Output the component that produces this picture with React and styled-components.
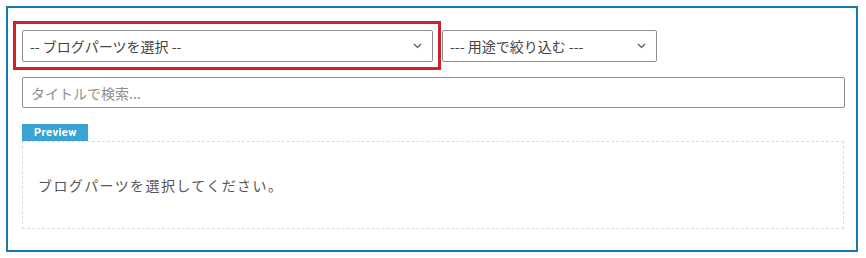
import React from "react";
import styled, { createGlobalStyle } from "styled-components";

const Global = createGlobalStyle`
  html, body { margin: 0; padding: 0; background: #fff; }
  body {
    padding: 6px 8px 0 6px;
    font-family: "Noto Sans CJK JP", "Noto Sans", "Liberation Sans", sans-serif;
    color: #333;
  }
`;

const Panel = styled.div`
  border: 2px solid #1479ad;
  padding: 13px 11px 21px 14px;
  display: flex;
  flex-direction: column;
`;

const Row = styled.div`
  display: flex;
  align-items: flex-start;
`;

const Highlight = styled.div`
  border: 3px solid #d0202c;
  padding: 6px 5px 5px 6px;
  margin: 0 1px 0 -9px;
  display: flex;
`;

const SelectBox = styled.div`
  box-sizing: border-box;
  width: ${(p) => p.$w}px;
  height: 32px;
  margin-top: ${(p) => p.$top || 0}px;
  border: 1px solid #8f8f8f;
  border-radius: 2px;
  background: #fff;
  display: flex;
  align-items: center;
  justify-content: space-between;
  padding: 0 ${(p) => p.$pr}px 0 7px;
  font-size: 14px;
  color: #444;
  white-space: nowrap;
`;

const Chevron = () => (
  <svg width="9" height="6" viewBox="0 0 9 6" fill="none">
    <path d="M1 1l3.5 3.5L8 1" stroke="#555" strokeWidth="1.2" />
  </svg>
);

const Search = styled.input`
  box-sizing: border-box;
  width: 823px;
  height: 31px;
  margin-top: 7px;
  border: 1px solid #8f8f8f;
  border-radius: 2px;
  padding: 0 8px;
  font-family: inherit;
  font-size: 14px;
  color: #333;
  outline: none;
  &::placeholder { color: #8f8f8f; }
`;

const PreviewArea = styled.div`
  margin-top: 16px;
  width: 822px;
  display: flex;
  flex-direction: column;
`;

const Tab = styled.div`
  align-self: flex-start;
  background: #3ba3d3;
  color: #fff;
  font-family: Roboto, "Liberation Sans", Arial, sans-serif;
  font-weight: bold;
  font-size: 11px;
  letter-spacing: 0.5px;
  height: 17px;
  line-height: 17px;
  padding: 0 11px 0 12px;
`;

const PreviewBox = styled.div`
  box-sizing: border-box;
  height: 88px;
  border: 1px dashed #dcdcdc;
  display: flex;
  align-items: center;
  padding: 0 0 0 15px;
  font-size: 14px;
  letter-spacing: 1.4px;
  color: #555;
`;

export default function App() {
  return (
    <>
      <Global />
      <Panel>
        <Row>
          <Highlight>
            <SelectBox $w={411} $pr={10}>
              <span>-- ブログパーツを選択 --</span>
              <Chevron />
            </SelectBox>
          </Highlight>
          <SelectBox $w={215} $pr={10} $top={9}>
            <span>--- 用途で絞り込む ---</span>
            <Chevron />
          </SelectBox>
        </Row>
        <Search placeholder="タイトルで検索..." />
        <PreviewArea>
          <Tab>Preview</Tab>
          <PreviewBox>ブログパーツを選択してください。</PreviewBox>
        </PreviewArea>
      </Panel>
    </>
  );
}
